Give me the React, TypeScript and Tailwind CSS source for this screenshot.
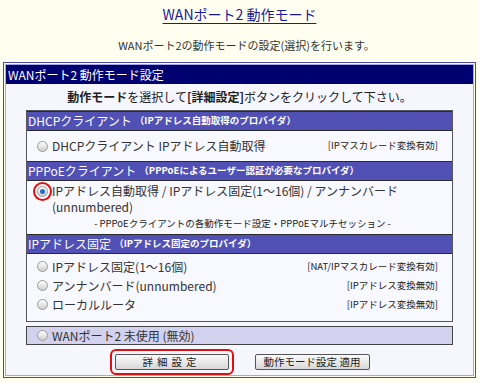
import React from "react";

const font = { fontFamily: '"Noto Sans CJK JP", "Noto Sans", sans-serif' };

function Radio({ checked = false }: { checked?: boolean }) {
  return (
    <span className="relative inline-flex h-[11px] w-[11px] shrink-0 items-center justify-center rounded-full border border-[#9a9a9a] bg-gradient-to-b from-[#ffffff] to-[#cfcfcf]">
      {checked && <span className="h-[5px] w-[5px] rounded-full bg-[#1e6fc8]" />}
      {checked && (
        <span className="absolute left-[-5px] top-[-5px] h-[19px] w-[19px] rounded-full border-2 border-[#e01010]" />
      )}
    </span>
  );
}

function SectionHeader({ title, sub }: { title: string; sub: string }) {
  return (
    <div className="flex h-[20px] items-center border-y border-[#2a2a2a] bg-[#5151b5] pl-[1px] text-white">
      <span className="text-[12px] leading-none">{title}</span>
      <span className="ml-[3px] text-[9.5px] font-bold leading-none">（{sub}）</span>
    </div>
  );
}

function Row({ label, note }: { label: string; note?: string }) {
  return (
    <div className="flex h-[19px] items-center pl-[10px] pr-[14px]">
      <Radio />
      <span className="ml-[4px] text-[12px] leading-none text-[#333]">{label}</span>
      {note && <span className="ml-auto text-[9.5px] leading-none text-[#222]">{note}</span>}
    </div>
  );
}

export default function App() {
  return (
    <div className="h-[383px] w-[479px] bg-[#fffff0]" style={font}>
      <div className="flex h-[62px] flex-col items-center pt-[4px]">
        <div className="text-[14px] leading-[20px] text-[#1a1a99] underline decoration-1 underline-offset-[3px]">
          WANポート2 動作モード
        </div>
        <div className="mt-[13px] pl-[14px] text-[11px] leading-[16px] text-[#333]">
          WANポート2の動作モードの設定(選択)を行います。
        </div>
      </div>
      <div className="mx-[3px] h-[316px] border border-[#4848b8] p-[1px]">
        <div className="h-full border border-[#a8a8e0] bg-[#f6f6ff]">
          <div className="flex h-[19px] items-center bg-[#000070] pl-[2px] text-[12px] leading-none text-white">
            WANポート2 動作モード設定
          </div>
          <div className="flex h-[26px] items-center justify-center text-[12px] leading-none text-[#222]">
            <span className="font-bold">動作モード</span>を選択して<span className="font-bold">[詳細設定]</span>ボタンをクリックして下さい。
          </div>
          <div className="mx-[20px] border border-[#555] bg-[#f8f8ff]">
            <SectionHeader title="DHCPクライアント" sub="IPアドレス自動取得のプロバイダ" />
            <div className="flex h-[30px] items-center pl-[10px] pr-[14px]">
              <Radio />
              <span className="ml-[4px] text-[12px] leading-none text-[#333]">DHCPクライアント IPアドレス自動取得</span>
              <span className="ml-auto text-[9.5px] leading-none text-[#222]">[IPマスカレード変換有効]</span>
            </div>
            <SectionHeader title="PPPoEクライアント" sub="PPPoEによるユーザー認証が必要なプロバイダ" />
            <div className="flex h-[53px] flex-col pl-[10px] pr-[14px] pt-[2px]">
              <div className="flex h-[16px] items-center">
                <Radio checked />
                <span className="ml-[4px] text-[12px] leading-none text-[#333]">
                  IPアドレス自動取得 / IPアドレス固定(1〜16個) / アンナンバード
                </span>
              </div>
              <div className="ml-[15px] flex h-[16px] items-center text-[12px] leading-none text-[#333]">
                (unnumbered)
              </div>
              <div className="flex h-[17px] items-center justify-center pl-[10px] text-[9.5px] leading-none text-[#222]">
                - PPPoEクライアントの各動作モード設定・PPPoEマルチセッション -
              </div>
            </div>
            <SectionHeader title="IPアドレス固定" sub="IPアドレス固定のプロバイダ" />
            <div className="flex flex-col pb-[7px] pt-[3px]">
              <Row label="IPアドレス固定(1〜16個)" note="[NAT/IPマスカレード変換有効]" />
              <Row label="アンナンバード(unnumbered)" note="[IPアドレス変換無効]" />
              <Row label="ローカルルータ" note="[IPアドレス変換無効]" />
            </div>
          </div>
          <div className="mx-[20px] mt-[4px] flex h-[19px] items-center border border-[#444] bg-[#d2d2ee] pl-[10px]">
            <Radio />
            <span className="ml-[4px] text-[12px] leading-none text-[#333]">WANポート2 未使用 (無効)</span>
          </div>
          <div className="mt-[4px] flex items-center justify-center gap-[21px]">
            <div className="rounded-[6px] border-2 border-[#e01010] p-[3px]">
              <button className="flex h-[16px] w-[114px] items-center justify-center rounded-[2px] border border-[#555] bg-gradient-to-b from-[#fafafa] to-[#d8d8d8] text-[10.5px] leading-none tracking-[4px] text-[#222]">
                詳細設定
              </button>
            </div>
            <button className="flex h-[16px] w-[115px] items-center justify-center rounded-[2px] border border-[#555] bg-gradient-to-b from-[#fafafa] to-[#d8d8d8] text-[10.5px] leading-none text-[#222]">
              動作モード設定 適用
            </button>
          </div>
        </div>
      </div>
    </div>
  );
}
